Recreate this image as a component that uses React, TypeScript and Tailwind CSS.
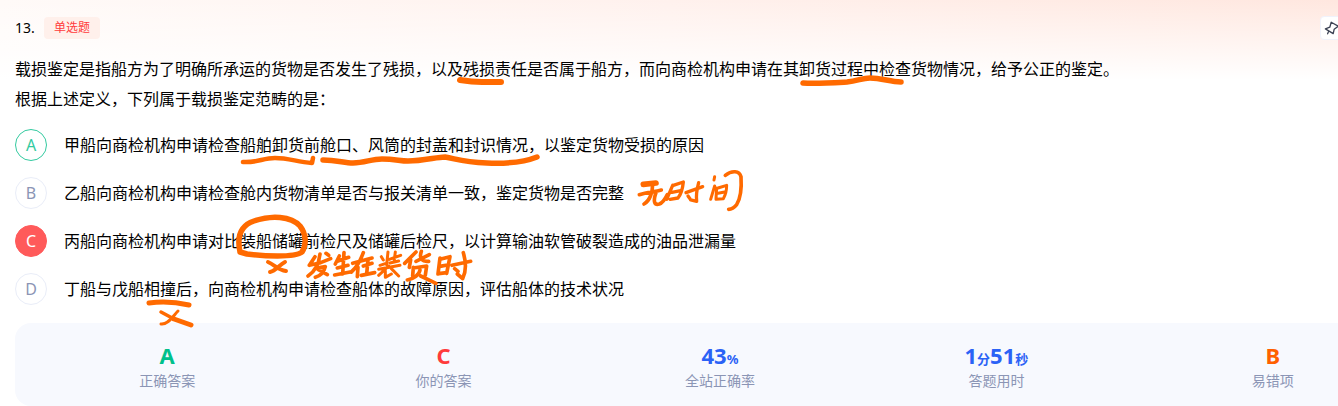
import React from "react";

type OptionState = "correct" | "wrong" | "idle";

const options: { key: string; text: string; state: OptionState }[] = [
  { key: "A", text: "甲船向商检机构申请检查船舶卸货前舱口、风筒的封盖和封识情况，以鉴定货物受损的原因", state: "correct" },
  { key: "B", text: "乙船向商检机构申请检查舱内货物清单是否与报关清单一致，鉴定货物是否完整", state: "idle" },
  { key: "C", text: "丙船向商检机构申请对比装船储罐前检尺及储罐后检尺，以计算输油软管破裂造成的油品泄漏量", state: "wrong" },
  { key: "D", text: "丁船与戊船相撞后，向商检机构申请检查船体的故障原因，评估船体的技术状况", state: "idle" },
];

const badgeStyles: Record<OptionState, string> = {
  correct: "border-[#34caa0] bg-white text-[#34caa0]",
  wrong: "border-[#ff5a5a] bg-[#ff5a5a] text-white",
  idle: "border-[#e9edf8] bg-white text-[#8b95b5]",
};

const stats: { label: string; color: string; parts: { value: string; unit?: string }[] }[] = [
  { label: "正确答案", color: "text-[#00c08b]", parts: [{ value: "A" }] },
  { label: "你的答案", color: "text-[#ff3b3b]", parts: [{ value: "C" }] },
  { label: "全站正确率", color: "text-[#2b62f6]", parts: [{ value: "43", unit: "%" }] },
  { label: "答题用时", color: "text-[#2b62f6]", parts: [{ value: "1", unit: "分" }, { value: "51", unit: "秒" }] },
  { label: "易错项", color: "text-[#ff6000]", parts: [{ value: "B" }] },
];

// Freehand pen marks laid over the question.
function InkLayer() {
  return (
    <svg
      aria-hidden="true"
      className="pointer-events-none absolute left-0 top-0 overflow-visible"
      width="760"
      height="340"
      fill="none"
      stroke="#ff6a00"
      strokeLinecap="round"
      strokeLinejoin="round"
    >
      <g strokeWidth="6">
        <path d="M460 80Q472 82 482 82T501 82" />
        <path d="M803 83C815 84 830 83 847 82C858 81 862 78 870 78C882 78 890 82 901 82" strokeWidth="5.5" />
        <path d="M243 162C257 163 263 158 275 158C289 158 297 162 312 163L313 158" strokeWidth="4.5" />
        <path d="M323 160C337 160 344 163 353 163C365 163 371 159 382 159C395 159 400 161 408 161C423 161 437 157 445 157C457 159 462 162 487 163C510 164 527 161 537 157" strokeWidth="5.5" />
        <path d="M149 303C162 301 176 302 189 305" strokeWidth="5" />
        <path d="M161 312L174 319" strokeWidth="3.5" />
        <path d="M174 319L191 325" strokeWidth="5" />
        <path d="M178 311C173 316 168 325 161 324" strokeWidth="3" />
        <path d="M240 252C237 238 239 226 254 221C271 215 291 216 300 226C306 234 307 244 302 252C295 258 262 256 247 254L240 252" strokeWidth="5.5" />
        <path d="M268 262C275 265 278 270 286 271M285 262C279 265 276 271 270 272" strokeWidth="4" />
      </g>
      <g transform="translate(300 240) scale(.3333)" strokeWidth="11">
        <path d="M45 50L28 76L62 68L92 56M60 42C57 70 48 92 24 108M50 84L76 80C72 96 60 108 46 112M54 88L82 104M78 40L86 46" />
        <path d="M118 48L106 72M112 64L146 52M132 38L128 102M112 84L144 76M104 105L150 96" />
        <path d="M158 70L216 54M190 38C182 60 170 82 154 96M174 82L172 110M190 78L216 70M204 60L200 102M184 106L224 98" />
        <path d="M244 50L250 60M264 36L260 74M240 76L258 70M268 58L302 46M286 36L282 66M270 69L296 63M236 88L300 76M266 78L236 106M256 92L256 112L274 102M274 86L296 108" strokeWidth="9" />
        <path d="M348 36L314 70M332 60L328 82M348 64L388 44M364 34C356 58 368 66 386 64M340 82L338 108M340 84L380 78L376 106M360 90C358 104 342 116 322 120M362 108L408 130" />
        <path d="M420 54L414 102M420 58L450 50L440 100M420 79L442 75M416 101L440 98M456 76L512 64M490 38C497 62 500 92 488 116L472 102M464 86L474 94" />
      </g>
      <g transform="translate(620 160) scale(.3333)" strokeWidth="11">
        <path d="M70 73L108 69" strokeWidth="17" />
        <path d="M58 104C82 96 102 96 124 90M98 72C98 96 90 122 72 132M108 98C98 126 104 136 118 132C130 128 136 116 142 104" />
        <path d="M158 76L140 118M160 76L190 66C188 86 182 104 174 114L150 118M156 97L182 92" strokeWidth="10" />
        <path d="M198 98L248 80M236 68C230 90 228 106 230 124L212 120M204 108L210 116" strokeWidth="10" />
        <path d="M284 50L282 60M284 78L272 118M294 84L320 76C320 92 316 106 310 116L288 118M290 84L288 116M294 100L314 96" strokeWidth="9" />
        <path d="M316 46C336 30 358 32 363 50C365 80 361 116 350 134C342 144 334 148 326 148" />
      </g>
    </svg>
  );
}

export default function App() {
  return (
    <main className="relative h-screen overflow-hidden bg-white bg-[linear-gradient(to_bottom,transparent,white_80px),linear-gradient(to_right,#fffaf8,#fff1ed_50%,#ffe7df)] pl-[15px] pt-4 font-['Noto_Sans','Noto_Sans_CJK_SC',sans-serif] text-base text-black">
      <header className="-mr-1.5 flex h-6 items-center gap-2">
        <span className="w-[21px] text-sm">13.</span>
        <span className="rounded bg-[#fff0eb] px-2.5 text-xs leading-[22px] text-[#ff3b3b]">单选题</span>
        <button
          type="button"
          aria-label="固定"
          className="ml-auto flex size-6 items-center justify-center rounded border border-[#f0f2fb] bg-white"
        >
          <svg
            className="size-4 shrink-0"
            viewBox="0 0 16 16"
            fill="none"
            stroke="#3c4254"
            strokeWidth="1.3"
            strokeLinecap="round"
            strokeLinejoin="round"
            aria-hidden="true"
          >
            <path d="M7.2 2.2L14.2 6.2L10.2 9.2L9.2 13.6L1.4 8.9L5.8 7.2ZM4.8 11.1L3.6 13.8" />
          </svg>
        </button>
      </header>

      <section className="mt-3.5 leading-[30px]">
        <p>载损鉴定是指船方为了明确所承运的货物是否发生了残损，以及残损责任是否属于船方，而向商检机构申请在其卸货过程中检查货物情况，给予公正的鉴定。</p>
        <p>根据上述定义，下列属于载损鉴定范畴的是：</p>
      </section>

      <ul className="mt-[15px] flex flex-col gap-4">
        {options.map((o) => (
          <li key={o.key}>
            <button type="button" className="flex items-center gap-[17px] text-left">
              <span className={`flex size-8 shrink-0 items-center justify-center rounded-full border ${badgeStyles[o.state]}`}>
                {o.key}
              </span>
              <span>{o.text}</span>
            </button>
          </li>
        ))}
      </ul>

      <dl className="-mr-[87px] mt-[18px] grid grid-cols-5 rounded-2xl bg-[#f7f9fe] px-3.5 pb-3 pt-[19px] text-center">
        {stats.map((s) => (
          <div key={s.label} className="flex flex-col-reverse">
            <dt className="text-sm leading-[26px] text-[#8b95b5]">{s.label}</dt>
            <dd className={`flex items-baseline justify-center text-[22px] font-bold leading-[26px] ${s.color}`}>
              {s.parts.map((p) => (
                <React.Fragment key={p.value}>
                  <span>{p.value}</span>
                  {p.unit && <span className="text-[13px] leading-none">{p.unit}</span>}
                </React.Fragment>
              ))}
            </dd>
          </div>
        ))}
      </dl>

      <InkLayer />
    </main>
  );
}
